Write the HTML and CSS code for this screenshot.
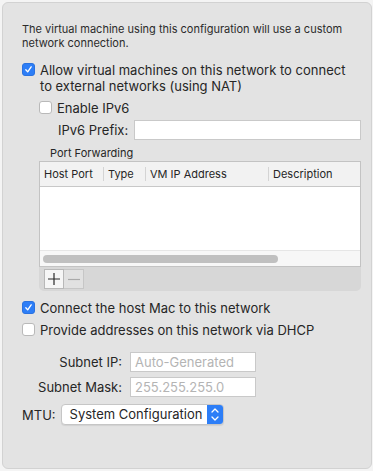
FILE: index.html
```html
<!DOCTYPE html>
<html lang="en">
  <head>
    <meta charset="UTF-8" />
    <title>Custom Network</title>
    <link rel="stylesheet" href="styles.css">
  </head>
  <body>
    <div class="panel">
      <p class="intro">
        The virtual machine using this configuration will use a custom
        network connection.
      </p>

      <div class="check-row nat-toggle">
        <span class="check on">
          <svg viewBox="0 0 14 14" width="14" height="14"><path d="M3.6 7.4 L6 10 L10.4 3.6" fill="none" stroke="#fff" stroke-width="1.7" stroke-linecap="round" stroke-linejoin="round"/></svg>
        </span>
        <span class="check-text">Allow virtual machines on this network to connect to external networks (using NAT)</span>
      </div>

      <div class="nat">
        <div class="check-row ipv6">
          <span class="check"></span>
          <span class="check-text">Enable IPv6</span>
        </div>

        <div class="field-row prefix">
          <label>IPv6 Prefix:</label>
          <span class="input wide"></span>
        </div>

        <div class="group-title">Port Forwarding</div>

        <div class="table">
          <div class="thead">
            <span class="col c1">Host Port</span>
            <span class="col c2">Type</span>
            <span class="col c3">VM IP Address</span>
            <span class="col c4">Description</span>
          </div>
          <div class="tbody"></div>
          <div class="hscroll"><span class="knob"></span></div>
        </div>
        <div class="table-tools">
          <button class="tool add">
            <svg viewBox="0 0 18 18" width="18" height="18"><path d="M9 3 V15 M3 9 H15" stroke="#2a2a2a" stroke-width="1.2"/></svg>
          </button>
          <button class="tool remove">
            <svg viewBox="0 0 18 18" width="18" height="18"><path d="M3 9.5 H15" stroke="#a9a9a9" stroke-width="1.2"/></svg>
          </button>
        </div>
      </div>

      <div class="check-row host">
        <span class="check on">
          <svg viewBox="0 0 14 14" width="14" height="14"><path d="M3.6 7.4 L6 10 L10.4 3.6" fill="none" stroke="#fff" stroke-width="1.7" stroke-linecap="round" stroke-linejoin="round"/></svg>
        </span>
        <span class="check-text">Connect the host Mac to this network</span>
      </div>

      <div class="check-row dhcp">
        <span class="check"></span>
        <span class="check-text">Provide addresses on this network via DHCP</span>
      </div>

      <div class="subnet">
        <div class="field-row">
          <label class="right">Subnet IP:</label>
          <span class="input short placeholder">Auto-Generated</span>
        </div>
        <div class="field-row">
          <label class="right">Subnet Mask:</label>
          <span class="input short placeholder">255.255.255.0</span>
        </div>
      </div>

      <div class="field-row mtu">
        <label>MTU:</label>
        <div class="popup">
          <span class="popup-text">System Configuration</span>
          <span class="stepper">
            <svg viewBox="0 0 16 21" width="16" height="21"><path d="M5 8 L8 5 L11 8 M5 13 L8 16 L11 13" fill="none" stroke="#fff" stroke-width="1.3" stroke-linecap="round" stroke-linejoin="round"/></svg>
          </span>
        </div>
      </div>
    </div>
  </body>
</html>
```

FILE: styles.css
```css
body,
html {
  margin: 0;
  padding: 0;
  background: #f4f4f4;
  font-family: "Inter", "Liberation Sans", sans-serif;
  color: #262626;
}

.panel {
  box-sizing: border-box;
  margin: 2px 1px 0 2px;
  height: 467px;
  padding: 19px 10px 0 19px;
  background: #e3e3e3;
  border: 1px solid #d2d2d2;
  border-radius: 6px;
}

.intro {
  margin: 0 0 12px 0;
  font-size: 11px;
  line-height: 14px;
  color: #2b2b2b;
}

.check-row {
  display: flex;
  align-items: flex-start;
  gap: 5px;
  font-size: 13px;
  line-height: 16px;
}

.nat-toggle .check-text {
  max-width: 310px;
}

.check {
  flex: none;
  box-sizing: border-box;
  width: 13px;
  height: 13px;
  margin-top: 1px;
  background: #ffffff;
  border: 1px solid #b9b9b9;
  border-radius: 3px;
  display: flex;
  align-items: center;
  justify-content: center;
}

.check.on {
  background: #2d7ef7;
  border-color: #2a72e0;
}

.check svg {
  width: 11px;
  height: 11px;
}

.nat {
  padding-left: 17px;
  margin-top: 6px;
}

.field-row {
  display: flex;
  align-items: center;
  font-size: 13px;
}

.prefix {
  margin-top: 4px;
  padding-left: 19px;
  gap: 6px;
}

.input {
  box-sizing: border-box;
  height: 20px;
  background: #ffffff;
  border: 1px solid #c9c9c9;
  font-size: 13px;
  line-height: 18px;
  padding-left: 4px;
}

.input.wide {
  flex: 1;
}

.input.short {
  width: 126px;
}

.placeholder {
  color: #b4b4b4;
}

.group-title {
  margin-top: 6px;
  padding-left: 11px;
  font-size: 11px;
  line-height: 14px;
}

.table {
  margin-top: 1px;
  border: 1px solid #c3c3c3;
  background: #ffffff;
}

.thead {
  display: flex;
  height: 24px;
  align-items: center;
  background: #f2f2f2;
  border-bottom: 1px solid #c8c8c8;
  font-size: 11px;
}

.col {
  box-sizing: border-box;
  padding-left: 4px;
  border-right: 1px solid #d4d4d4;
  line-height: 14px;
}

.c1 { width: 64px; }
.c2 { width: 42px; }
.c3 { width: 123px; }
.c4 { flex: 1; border-right: none; }

.tbody {
  height: 63px;
}

.hscroll {
  height: 15px;
  background: #f7f7f7;
  border-top: 1px solid #e6e6e6;
  display: flex;
  align-items: center;
  padding-left: 3px;
}

.knob {
  width: 235px;
  height: 8px;
  background: #c0c0c0;
  border-radius: 4px;
}

.table-tools {
  display: flex;
  height: 24px;
  padding: 2px 0 0 5px;
  box-sizing: border-box;
  background: #d7d7d7;
  border-radius: 0 0 5px 5px;
}

.tool {
  box-sizing: border-box;
  width: 20px;
  height: 20px;
  padding: 0;
  border: 1px solid #b8b8b8;
  background: #f6f6f6;
  display: flex;
  align-items: center;
  justify-content: center;
}

.tool.remove {
  background: #e1e1e1;
  border-color: #c6c6c6;
  border-left: none;
}

.host {
  margin-top: 9px;
}

.dhcp {
  margin-top: 6px;
}

.subnet {
  margin-top: 14px;
  display: flex;
  flex-direction: column;
  gap: 5px;
}

.subnet .field-row {
  gap: 8px;
}

label.right {
  width: 100px;
  text-align: right;
}

.mtu {
  margin-top: 7px;
  gap: 5px;
}

.popup {
  display: flex;
  box-sizing: border-box;
  height: 21px;
  width: 163px;
  background: #ffffff;
  border: 1px solid #c6c6c6;
  border-radius: 4px;
  box-shadow: 0 1px 1px rgba(0, 0, 0, 0.08);
  overflow: hidden;
}

.popup-text {
  flex: 1;
  padding-left: 8px;
  font-size: 13px;
  line-height: 19px;
}

.stepper {
  width: 16px;
  background: #2d7ef7;
  display: flex;
  align-items: center;
  justify-content: center;
}
```
